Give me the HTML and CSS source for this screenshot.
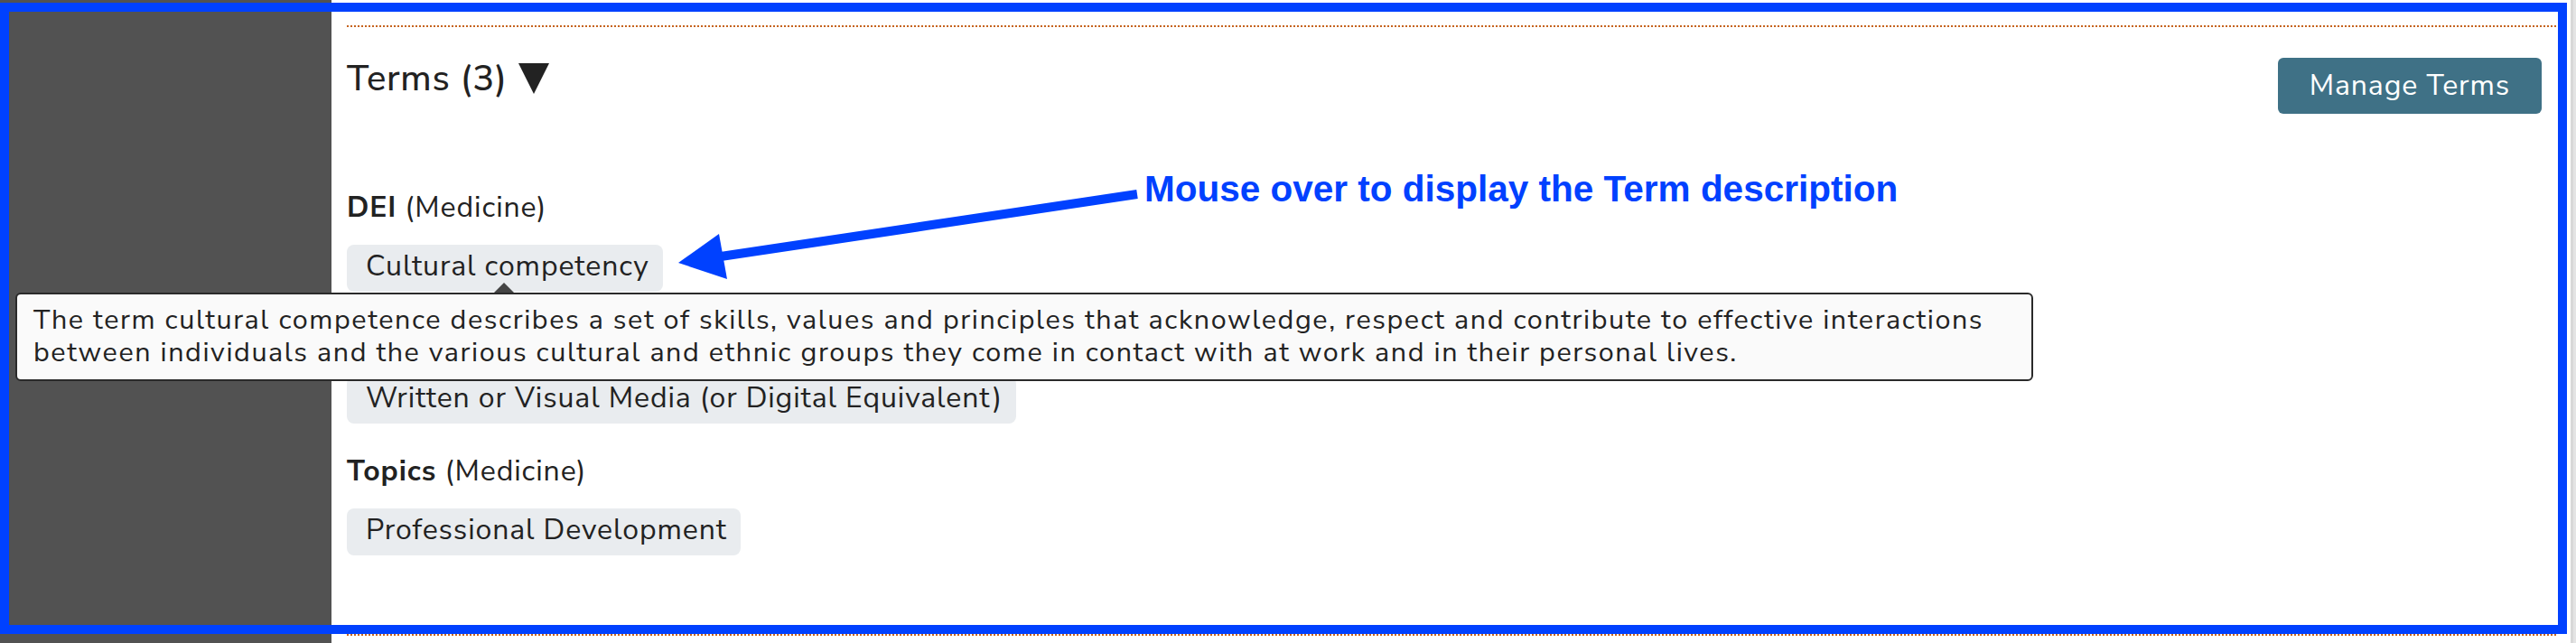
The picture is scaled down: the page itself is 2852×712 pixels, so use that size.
FILE: index.html
```html
<!DOCTYPE html>
<html lang="en">
<head>
<meta charset="utf-8">
<title>Terms</title>
<link rel="stylesheet" href="styles.css">
</head>
<body>
<div class="page">
  <aside class="sidebar"></aside>
  <main class="main">
    <section class="section">
      <div class="terms-header">
        <h2 class="terms-title">Terms (3)
          <svg class="caret" viewBox="0 0 34 34" width="34" height="34" aria-hidden="true"><polygon points="0,0 34,0 17,34" /></svg>
        </h2>
        <button class="btn-manage" type="button">Manage Terms</button>
      </div>

      <div class="vocab">
        <h3 class="vocab-title"><strong>DEI</strong> (Medicine)</h3>
        <ul class="tags">
          <li class="tag">Cultural competency
            <div class="tooltip" role="tooltip">The term cultural competence describes a set of skills, values and principles that acknowledge, respect and contribute to effective interactions between individuals and the various cultural and ethnic groups they come in contact with at work and in their personal lives.</div>
          </li>
        </ul>
      </div>

      <div class="vocab">
        <h3 class="vocab-title is-covered"><strong>Resource Types</strong> (Medicine)</h3>
        <ul class="tags">
          <li class="tag">Written or Visual Media (or Digital Equivalent)</li>
        </ul>
      </div>

      <div class="vocab">
        <h3 class="vocab-title"><strong>Topics</strong> (Medicine)</h3>
        <ul class="tags">
          <li class="tag">Professional Development</li>
        </ul>
      </div>
    </section>
    <section class="section section-next"></section>
  </main>
  <div class="scrollbar"></div>
</div>

<div class="annot-frame"></div>
<svg class="annot-arrow" width="2852" height="712" viewBox="0 0 2852 712" aria-hidden="true">
  <line x1="1259" y1="215" x2="798" y2="284" class="annot-line" />
  <polygon points="751,291 796,259 805,309" class="annot-head" />
</svg>
<p class="annot-text">Mouse over to display the Term description</p>
</body>
</html>
```

FILE: styles.css
```css
* {
  box-sizing: border-box;
}

html,
body {
  margin: 0;
  padding: 0;
}

body {
  position: relative;
  width: 2852px;
  height: 712px;
  overflow: hidden;
  background: #ffffff;
  color: #222222;
  font-family: "Nunito Sans", Lato, "Open Sans", sans-serif;
}

.page {
  display: flex;
  height: 712px;
}

.sidebar {
  flex: none;
  width: 367px;
  background: #525252;
}

.main {
  flex: 1;
  padding: 28px 13px 0 17px;
}

.scrollbar {
  flex: none;
  width: 8px;
  background: #e4e4e4;
  border-left: 2px solid #ffffff;
  box-shadow: inset 3px 0 0 #d8d8d8;
}

.section {
  padding: 34px 0 87px;
  background: repeating-linear-gradient(90deg, #c5631d 0 2px, transparent 2px 4px) top left / 100% 2px no-repeat;
}

.section-next {
  padding: 2px 0 0;
}

.terms-header {
  display: flex;
  justify-content: space-between;
  align-items: flex-start;
  margin-bottom: 80px;
}

.terms-title {
  display: flex;
  align-items: center;
  gap: 12px;
  margin: 0;
  padding-top: 1px;
  font-size: 40px;
  line-height: 48px;
  font-weight: 500;
  letter-spacing: 0.7px;
}

.caret {
  display: block;
  fill: #222222;
}

.btn-manage {
  margin: 2px 17px 0 0;
  height: 62px;
  padding: 0 35px;
  border: 0;
  border-radius: 6px;
  background: #3f7186;
  color: #ffffff;
  font-family: inherit;
  font-size: 32px;
  line-height: 62px;
  letter-spacing: 0.9px;
}

.vocab + .vocab {
  margin-top: 29px;
}

.vocab-title {
  margin: 0 0 17px;
  font-size: 32px;
  line-height: 48px;
  font-weight: 400;
  letter-spacing: 0.9px;
}

.vocab-title strong {
  font-weight: 700;
}

.vocab-title.is-covered {
  visibility: hidden;
}

.tags {
  display: flex;
  flex-wrap: wrap;
  gap: 12px;
  margin: 0;
  padding: 0;
  list-style: none;
}

.tag {
  position: relative;
  padding: 0 15px 4px 21px;
  border-radius: 8px;
  background: #e9ecef;
  font-size: 32px;
  line-height: 48px;
  letter-spacing: 0.9px;
}

.tooltip {
  position: absolute;
  z-index: 5;
  left: -367px;
  top: 53px;
  width: 2234px;
  padding: 10px 20px 12px 18px;
  border: 2px solid #2a2a2a;
  border-radius: 6px;
  background: #fafafa;
  color: #222222;
  font-size: 30.5px;
  line-height: 36px;
  letter-spacing: 1.58px;
}

.tooltip::before {
  content: "";
  position: absolute;
  left: 528px;
  top: -13px;
  border-left: 11px solid transparent;
  border-right: 11px solid transparent;
  border-bottom: 11px solid #444444;
}

.annot-frame {
  position: absolute;
  left: 0;
  top: 3px;
  width: 2842px;
  height: 699px;
  border: 10px solid #0041ff;
  pointer-events: none;
}

.annot-arrow {
  position: absolute;
  left: 0;
  top: 0;
  pointer-events: none;
}

.annot-line {
  stroke: #0041ff;
  stroke-width: 10;
}

.annot-head {
  fill: #0041ff;
}

.annot-text {
  position: absolute;
  left: 1267px;
  top: 189px;
  margin: 0;
  color: #0041ff;
  font-family: "Liberation Sans", Arial, sans-serif;
  font-size: 40.5px;
  font-weight: 700;
  line-height: 40px;
  white-space: nowrap;
}
```
